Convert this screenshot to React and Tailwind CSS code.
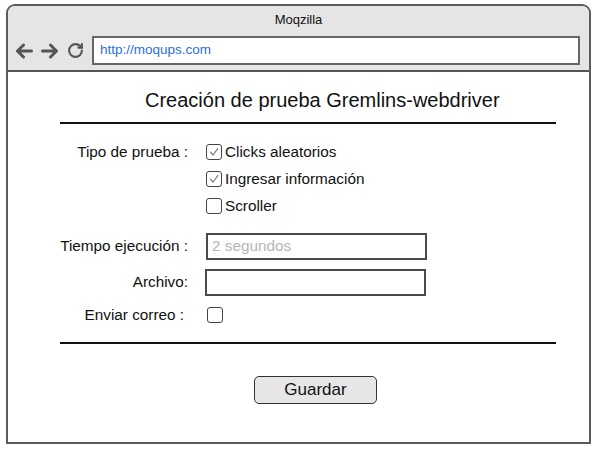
import { RotateCw } from "lucide-react";

const font = { fontFamily: '"Liberation Sans", Arial, sans-serif' };

function Check({ checked }) {
  return (
    <div className="w-[16px] h-[16px] border-[1.5px] border-[#444] rounded-[3px] bg-white flex items-center justify-center shrink-0">
      {checked && (
        <svg width="12" height="12" viewBox="0 0 12 12">
          <path d="M2.5 6.2 L5 9 L9.8 2.6" fill="none" stroke="#777" strokeWidth="1.2" strokeLinecap="round" strokeLinejoin="round" />
        </svg>
      )}
    </div>
  );
}

function Arrow({ flip }) {
  return (
    <svg width="18" height="16" viewBox="0 0 18 16" className={flip ? "-scale-x-100" : ""}>
      <path d="M16.5 8H2.5M8.5 2L2.5 8l6 6" fill="none" stroke="#555" strokeWidth="3" strokeLinecap="round" strokeLinejoin="round" />
    </svg>
  );
}

const options = [
  { label: "Clicks aleatorios", checked: true },
  { label: "Ingresar información", checked: true },
  { label: "Scroller", checked: false },
];

export default function App() {
  return (
    <div className="w-[597px] h-[449px] bg-white pt-[4px] pl-[6px] text-[#111]" style={font}>
      <div className="w-[585px] h-[440px] border-2 border-[#5b5b5b] rounded-t-[9px] overflow-hidden flex flex-col">
        {/* browser chrome */}
        <div className="h-[66px] bg-[#e5e5e5] border-b-2 border-[#555] shrink-0">
          <div className="h-[27px] flex items-center justify-center text-[13px]">Moqzilla</div>
          <div className="flex items-center pl-[7px] pt-[3px]">
            <Arrow />
            <div className="ml-[8px]"><Arrow flip /></div>
            <RotateCw size={17} strokeWidth={3} color="#555" className="ml-[8px]" />
            <div className="ml-[8px] w-[488px] h-[29px] border-2 border-[#666] bg-white flex items-center pl-[6px] text-[13.5px] text-[#2a6fdb]">
              http://moqups.com
            </div>
          </div>
        </div>

        {/* page */}
        <div className="flex flex-col text-[15.3px]">
          <h1 className="mt-[16px] pl-[137px] text-[20px] leading-[24px]">Creación de prueba Gremlins-webdriver</h1>
          <div className="mt-[10px] ml-[52px] w-[496px] h-[2px] bg-[#111]" />

          <div className="mt-[15px] flex">
            <div className="w-[180px] text-right h-[26px] leading-[26px]">Tipo de prueba :</div>
            <div className="ml-[18px] flex flex-col gap-[1px]">
              {options.map((o) => (
                <div key={o.label} className="h-[26px] flex items-center gap-[3px]">
                  <Check checked={o.checked} />
                  <span>{o.label}</span>
                </div>
              ))}
            </div>
          </div>

          <div className="mt-[14px] flex items-center">
            <div className="w-[180px] text-right">Tiempo ejecución :</div>
            <div className="ml-[18px] w-[221px] h-[27px] border-2 border-[#4a4a4a] flex items-center pl-[4px] text-[#b5b5b5]">
              2 segundos
            </div>
          </div>

          <div className="mt-[9px] flex items-center">
            <div className="w-[180px] text-right">Archivo:</div>
            <div className="ml-[17px] w-[221px] h-[27px] border-2 border-[#4a4a4a]" />
          </div>

          <div className="mt-[6px] flex items-center h-[26px]">
            <div className="w-[180px] text-right pr-[4px]">Enviar correo :</div>
            <div className="ml-[19px]"><Check /></div>
          </div>

          <div className="mt-[14px] ml-[52px] w-[496px] h-[2px] bg-[#111]" />

          <div className="mt-[32px] ml-[246px] w-[123px] h-[28px] bg-[#e6e6e6] border-[1.5px] border-[#333] rounded-[5px] flex items-center justify-center text-[17px]">
            Guardar
          </div>
        </div>
      </div>
    </div>
  );
}
